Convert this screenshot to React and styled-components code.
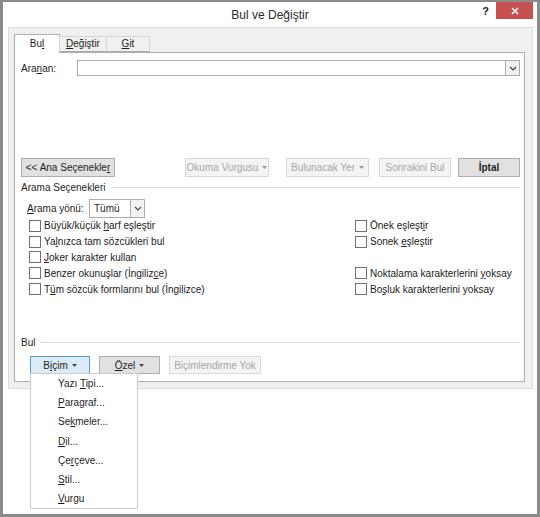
import React from 'react';
import styled, { createGlobalStyle } from 'styled-components';

const GlobalStyle = createGlobalStyle`
  html, body {
    margin: 0;
    padding: 0;
    background: #ffffff;
  }
  * {
    box-sizing: border-box;
  }
  body {
    font-family: "Liberation Sans", Arial, sans-serif;
    font-size: 10px;
    color: #1e1e1e;
    white-space: nowrap;
  }
`;

const Window = styled.div`
  width: 540px;
  height: 517px;
  border: 3px solid #8b8b8b;
  border-top-width: 2px;
  display: flex;
  flex-direction: column;
  background: #ffffff;
`;

const TitleBar = styled.div`
  height: 25px;
  display: grid;
  grid-template-columns: 1fr auto 1fr;
  background: #ffffff;
`;

const Title = styled.div`
  grid-column: 2;
  font-size: 12px;
  line-height: 26px;
  color: #2b2b2b;
`;

const Controls = styled.div`
  grid-column: 3;
  display: flex;
  justify-content: flex-end;
  align-items: flex-start;
  padding-right: 4px;
`;

const Help = styled.span`
  font-weight: 700;
  font-size: 11px;
  line-height: 18px;
  color: #222;
  margin-right: 7px;
`;

const CloseButton = styled.div`
  width: 37px;
  height: 17px;
  background: #c75050;
  display: flex;
  align-items: center;
  justify-content: center;
`;

const WindowBody = styled.div`
  flex: 1;
  padding: 0 4px 0 5px;
  background: #ffffff;
`;

const Dialog = styled.div`
  height: 362px;
  border: 1px solid #dadada;
  background: #f0f0f0;
  padding: 6px 7px 6px 5px;
  display: flex;
  flex-direction: column;
`;

const TabStrip = styled.div`
  display: flex;
  align-items: flex-end;
  height: 18px;
  position: relative;
  z-index: 1;
`;

const Tab = styled.div`
  width: ${(p) => p.$width}px;
  height: ${(p) => (p.$active ? '19px' : '16px')};
  margin-bottom: ${(p) => (p.$active ? '-1px' : '0')};
  background: ${(p) => (p.$active ? '#ffffff' : '#f0f0f0')};
  border: 1px solid ${(p) => (p.$active ? '#adadad' : '#d4d4d4')};
  border-bottom: ${(p) => (p.$active ? 'none' : '1px solid #adadad')};
  margin-left: ${(p) => (p.$active ? '0' : '-1px')};
  line-height: ${(p) => (p.$active ? '17px' : '14px')};
  text-align: center;
  color: #1e1e1e;
`;

const TabPane = styled.div`
  flex: 1;
  background: #ffffff;
  border: 1px solid #adadad;
  padding: 7px 4px 0 6px;
  display: flex;
  flex-direction: column;
`;

const Key = styled.span`
  text-decoration: underline;
  text-underline-offset: 1px;
`;

const FieldRow = styled.div`
  display: flex;
  align-items: center;
  height: ${(p) => p.$height || 16}px;
  margin-left: ${(p) => p.$indent || 0}px;
  margin-top: ${(p) => p.$top || 0}px;
`;

const Label = styled.span`
  width: ${(p) => p.$width}px;
  flex-shrink: 0;
`;

const ComboBox = styled.div`
  flex: ${(p) => (p.$width ? 'none' : '1')};
  width: ${(p) => (p.$width ? `${p.$width}px` : 'auto')};
  height: ${(p) => p.$height || 16}px;
  border: 1px solid #acacac;
  background: #ffffff;
  display: flex;
  align-items: stretch;
`;

const ComboText = styled.span`
  flex: 1;
  padding-left: 4px;
  line-height: ${(p) => (p.$tall ? 17 : 14)}px;
`;

const ComboArrow = styled.div`
  width: 14px;
  border-left: 1px solid #acacac;
  background: #f2f2f2;
  display: flex;
  align-items: center;
  justify-content: center;
`;

const ButtonRow = styled.div`
  display: flex;
  align-items: center;
  margin-top: ${(p) => p.$top || 0}px;
  margin-bottom: ${(p) => p.$bottom || 0}px;
  margin-left: ${(p) => p.$indent || 0}px;
`;

const Button = styled.div`
  position: relative;
  width: ${(p) => p.$width}px;
  height: ${(p) => p.$height || 19}px;
  margin-left: ${(p) => p.$gap || 0}px;
  border: 1px solid
    ${(p) => (p.$focus ? '#5a9ad7' : p.$disabled ? '#d9d9d9' : '#adadad')};
  background: ${(p) =>
    p.$focus ? '#dcebf8' : p.$disabled ? '#f4f4f4' : '#e1e1e1'};
  color: ${(p) => (p.$disabled ? '#a6a6a6' : '#1e1e1e')};
  font-weight: ${(p) => (p.$bold ? 700 : 400)};
  display: flex;
  align-items: center;
  justify-content: center;
  gap: 4px;
`;

const Spacer = styled.div`
  flex: 1;
`;

const SectionHeading = styled.div`
  display: flex;
  align-items: center;
  gap: 6px;
  height: 14px;
  margin-top: ${(p) => p.$top || 0}px;

  &::after {
    content: '';
    flex: 1;
    height: 1px;
    background: #dcdcdc;
  }
`;

const OptionGrid = styled.div`
  display: grid;
  grid-template-columns: 326px 1fr;
  grid-auto-rows: 15.8px;
  margin-left: 8px;
`;

const Option = styled.label`
  display: flex;
  align-items: center;
  gap: 3px;
  color: #222;
`;

const Box = styled.span`
  width: 12px;
  height: 12px;
  border: 1px solid #707070;
  background: #ffffff;
  flex-shrink: 0;
`;

const Menu = styled.div`
  position: absolute;
  top: 100%;
  left: -1px;
  width: 108px;
  background: #ffffff;
  border: 1px solid #cccccc;
  z-index: 5;
`;

const MenuItem = styled.div`
  height: 19.2px;
  line-height: 19px;
  padding-left: 27px;
  color: #1e1e1e;
`;

const Chevron = () => (
  <svg width="8" height="5" viewBox="0 0 8 5">
    <polyline points="1,1 4,4 7,1" fill="none" stroke="#444" strokeWidth="1.2" />
  </svg>
);

const Caret = ({ color = '#444' }) => (
  <svg width="5" height="3" viewBox="0 0 5 3">
    <polygon points="0,0 5,0 2.5,3" fill={color} />
  </svg>
);

const leftOptions = [
  <>Büyük/küçük <Key>h</Key>arf eşleştir</>,
  <>Ya<Key>l</Key>nızca tam sözcükleri bul</>,
  <><Key>J</Key>oker karakter kullan</>,
  <>Benzer okunuşlar (İngiliz<Key>c</Key>e)</>,
  <>T<Key>ü</Key>m sözcük formlarını bul (İngilizce)</>,
];

const rightOptions = [
  <>Önek eşleşt<Key>i</Key>r</>,
  <>Sonek <Key>e</Key>şleştir</>,
  null,
  <>Noktalama karakterlerini <Key>y</Key>oksay</>,
  <>Bo<Key>ş</Key>luk karakterlerini yoksay</>,
];

const menuItems = [
  <>Yazı <Key>T</Key>ipi...</>,
  <><Key>P</Key>aragraf...</>,
  <>Se<Key>k</Key>meler...</>,
  <><Key>D</Key>il...</>,
  <>Çe<Key>r</Key>çeve...</>,
  <><Key>S</Key>til...</>,
  <><Key>V</Key>urgu</>,
];

export default function App() {
  return (
    <>
      <GlobalStyle />
      <Window>
        <TitleBar>
          <Title>Bul ve Değiştir</Title>
          <Controls>
            <Help>?</Help>
            <CloseButton>
              <svg width="8" height="8" viewBox="0 0 8 8">
                <path d="M1 1 L7 7 M7 1 L1 7" stroke="#fff" strokeWidth="1.5" />
              </svg>
            </CloseButton>
          </Controls>
        </TitleBar>
        <WindowBody>
          <Dialog>
            <TabStrip>
              <Tab $active $width={46}>
                Bu<Key>l</Key>
              </Tab>
              <Tab $width={48}>
                <Key>D</Key>eğiştir
              </Tab>
              <Tab $width={44}>
                <Key>G</Key>it
              </Tab>
            </TabStrip>
            <TabPane>
              <FieldRow>
                <Label $width={56}>
                  Ara<Key>n</Key>an:
                </Label>
                <ComboBox>
                  <ComboText />
                  <ComboArrow>
                    <Chevron />
                  </ComboArrow>
                </ComboBox>
              </FieldRow>

              <ButtonRow $top={82}>
                <Button $width={94}>
                  <span>
                    &lt;&lt; Ana Seçenekle<Key>r</Key>
                  </span>
                </Button>
                <Button $width={84} $gap={70} $disabled>
                  <span>Okuma Vurgusu</span>
                  <Caret color="#999" />
                </Button>
                <Button $width={83} $gap={17} $disabled>
                  <span>Bulunacak Yer</span>
                  <Caret color="#999" />
                </Button>
                <Button $width={72} $gap={10} $disabled>
                  <span>Sonrakini Bul</span>
                </Button>
                <Button $width={62} $gap={7} $bold>
                  <span>İptal</span>
                </Button>
              </ButtonRow>

              <SectionHeading $top={3}>Arama Seçenekleri</SectionHeading>

              <FieldRow $height={19} $indent={6} $top={5}>
                <Label $width={62}>
                  <Key>A</Key>rama yönü:
                </Label>
                <ComboBox $width={56} $height={19}>
                  <ComboText $tall>Tümü</ComboText>
                  <ComboArrow>
                    <Chevron />
                  </ComboArrow>
                </ComboBox>
              </FieldRow>

              <OptionGrid>
                {leftOptions.map((l, i) => (
                  <React.Fragment key={i}>
                    <Option>
                      <Box />
                      <span>{l}</span>
                    </Option>
                    {rightOptions[i] ? (
                      <Option>
                        <Box />
                        <span>{rightOptions[i]}</span>
                      </Option>
                    ) : (
                      <span />
                    )}
                  </React.Fragment>
                ))}
              </OptionGrid>

              <Spacer />

              <SectionHeading>Bul</SectionHeading>
              <ButtonRow $top={7} $indent={9} $bottom={7}>
                <Button $width={60} $height={18} $focus>
                  <span>
                    B<Key>i</Key>çim
                  </span>
                  <Caret />
                  <Menu>
                    {menuItems.map((m, i) => (
                      <MenuItem key={i}>{m}</MenuItem>
                    ))}
                  </Menu>
                </Button>
                <Button $width={61} $height={18} $gap={9}>
                  <span>
                    <Key>Ö</Key>zel
                  </span>
                  <Caret />
                </Button>
                <Button $width={92} $height={18} $gap={9} $disabled>
                  <span>Biçimlendirme Yok</span>
                </Button>
              </ButtonRow>
            </TabPane>
          </Dialog>
        </WindowBody>
      </Window>
    </>
  );
}
